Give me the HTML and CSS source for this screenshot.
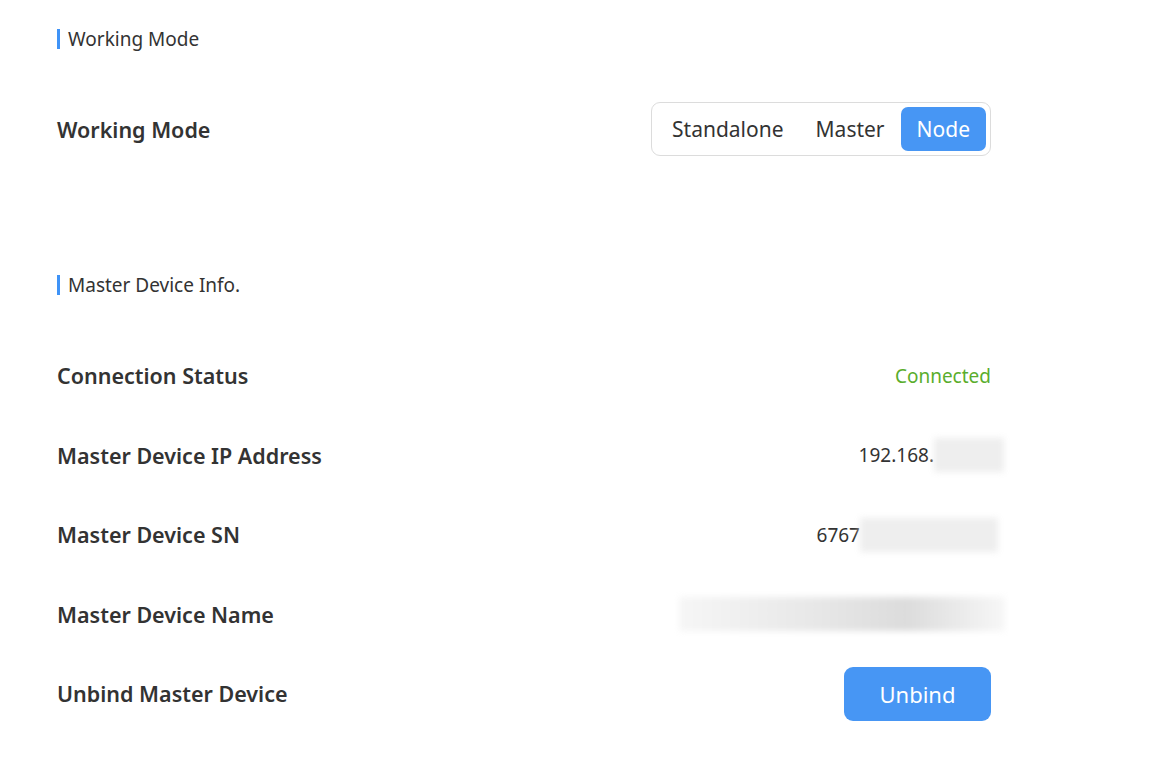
FILE: index.html
```html
<!DOCTYPE html>
<html lang="en">
<head>
<meta charset="utf-8">
<title>Working Mode</title>
<link rel="stylesheet" href="styles.css">
</head>
<body>
<main class="page">
  <section class="section">
    <h2 class="section-title">Working Mode</h2>
    <div class="row row-mode">
      <span class="label">Working Mode</span>
      <div class="segmented">
        <button class="seg">Standalone</button>
        <button class="seg">Master</button>
        <button class="seg seg-active">Node</button>
      </div>
    </div>
  </section>

  <section class="section section-master">
    <h2 class="section-title">Master Device Info.</h2>
    <div class="row">
      <span class="label">Connection Status</span>
      <span class="value value-ok">Connected</span>
    </div>
    <div class="row">
      <span class="label">Master Device IP Address</span>
      <span class="value">192.168.<span class="masked masked-ip"></span></span>
    </div>
    <div class="row">
      <span class="label">Master Device SN</span>
      <span class="value">6767<span class="masked masked-sn"></span></span>
    </div>
    <div class="row">
      <span class="label">Master Device Name</span>
      <span class="value"><span class="masked masked-name"></span></span>
    </div>
    <div class="row">
      <span class="label">Unbind Master Device</span>
      <button class="btn-primary">Unbind</button>
    </div>
  </section>
</main>
</body>
</html>
```

FILE: styles.css
```css
* { box-sizing: border-box; }

html, body {
  margin: 0;
  background: #ffffff;
}

body {
  font-family: "Noto Sans", "Open Sans", sans-serif;
  color: #333333;
}

.page {
  width: 934px;
  margin-left: 57px;
  padding-top: 29px;
}

.section-title {
  margin: 0;
  display: flex;
  align-items: center;
  height: 20px;
  font-size: 19px;
  font-weight: 400;
  color: #333;
  border-left: 3px solid #3f93f7;
  padding-left: 8px;
  line-height: 16px;
}

.row {
  display: flex;
  align-items: center;
  justify-content: space-between;
  height: 79.5px;
}

.row-mode {
  margin-top: 40px;
  height: 80px;
}

.label {
  font-size: 21.5px;
  font-weight: 600;
  color: #333;
}

.segmented {
  display: flex;
  height: 54px;
  padding: 4px;
  border: 1px solid #dcdcdc;
  border-radius: 9px;
  background: #fff;
}

.seg {
  border: none;
  background: transparent;
  font-family: inherit;
  font-size: 21px;
  color: #333;
  padding: 0 16px;
  border-radius: 7px;
  cursor: pointer;
}

.seg-active {
  background: #4796f4;
  color: #fff;
}

.section-master {
  margin-top: 106px;
}

.section-master .section-title {
  margin-bottom: 41px;
}

.value {
  font-size: 19px;
  color: #333;
  display: flex;
  align-items: center;
}

.value-ok {
  color: #5aad2c;
}

.masked {
  display: inline-block;
  height: 34px;
  background: #eeeeee;
  filter: blur(3px);
}

.masked-ip {
  width: 70px;
  margin-right: -13px;
}

.masked-sn {
  width: 138px;
  margin-right: -7px;
}

.masked-name {
  width: 326px;
  margin-right: -14px;
  background: linear-gradient(90deg, #f6f6f6 0%, #e8e8e8 40%, #dcdcdc 70%, #f7f7f7 100%);
}

.btn-primary {
  width: 147px;
  height: 54px;
  border: none;
  border-radius: 9px;
  background: #4796f4;
  color: #fff;
  font-family: inherit;
  font-size: 22px;
  cursor: pointer;
}
```
